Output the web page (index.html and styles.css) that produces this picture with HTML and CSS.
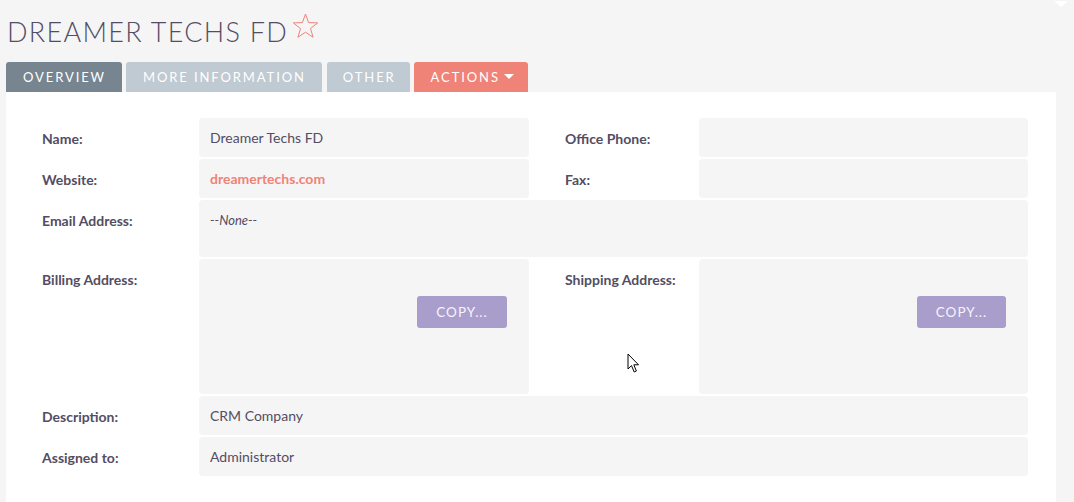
FILE: index.html
```html
<!DOCTYPE html>
<html>
<head>
<meta charset="utf-8">
<link rel="stylesheet" href="styles.css">
</head>
<body>
<div class="corner-caret"></div>
<div class="page">
  <h1 class="title">DREAMER TECHS FD<svg class="star" width="27" height="26" viewBox="0 0 27 26"><polygon points="13.5,1 16.6,9.6 25.7,9.9 18.5,15.5 21.1,24.3 13.5,19.2 5.9,24.3 8.5,15.5 1.3,9.9 10.4,9.6" fill="none" stroke="#f08377" stroke-width="1" stroke-linejoin="round"/></svg></h1>
  <nav class="tabs">
    <div class="tab tab-active">OVERVIEW</div>
    <div class="tab">MORE INFORMATION</div>
    <div class="tab tab-other">OTHER</div>
    <div class="tab tab-actions">ACTIONS<span class="caret"></span></div>
  </nav>
  <section class="panel">
    <div class="grid">
      <div class="label">Name:</div>
      <div class="value">Dreamer Techs FD</div>
      <div class="label label-right">Office Phone:</div>
      <div class="value"></div>

      <div class="label">Website:</div>
      <div class="value"><span class="link">dreamertechs.com</span></div>
      <div class="label label-right">Fax:</div>
      <div class="value"></div>

      <div class="label">Email Address:</div>
      <div class="value value-wide value-email"><em>--None--</em></div>

      <div class="label">Billing Address:</div>
      <div class="value value-address"><span class="copy-btn">COPY...</span></div>
      <div class="label label-right">Shipping Address:</div>
      <div class="value value-address value-address-right"><span class="copy-btn copy-btn-right">COPY...</span></div>

      <div class="label">Description:</div>
      <div class="value value-wide">CRM Company</div>

      <div class="label">Assigned to:</div>
      <div class="value value-wide">Administrator</div>
    </div>
  </section>
</div>
<svg class="cursor" width="13" height="21" viewBox="0 0 13 21"><path d="M1 1 L1 16 L4.5 12.6 L7.2 19 L9.4 18 L6.8 11.8 L11.5 11.8 Z" fill="#ffffff" stroke="#000000" stroke-width="1" stroke-linejoin="round"/></svg>
</body>
</html>
```

FILE: styles.css
```css
html, body {
  margin: 0;
  padding: 0;
  background: #f5f5f5;
  font-family: Lato, "Open Sans", sans-serif;
  color: #534d64;
  height: 100%;
  overflow: hidden;
}

.page {
  padding: 16px 18px 0 6px;
  display: flex;
  flex-direction: column;
  height: 100%;
  box-sizing: border-box;
}

.title {
  margin: 0 0 14px 1px;
  font-weight: 300;
  font-size: 27px;
  line-height: 32px;
  height: 32px;
  letter-spacing: 1.3px;
  color: #534d64;
  display: flex;
  align-items: flex-start;
}

.star {
  margin-left: 4px;
  margin-top: -3px;
}

.tabs {
  display: flex;
  gap: 4px;
  height: 30px;
}

.tab {
  height: 30px;
  line-height: 31px;
  padding: 0 16px 0 17px;
  font-size: 13px;
  letter-spacing: 1.9px;
  color: #ffffff;
  background: #bfcad2;
  border-radius: 3px 3px 0 0;
}

.tab-other {
  margin-left: 1px;
  padding: 0 14px 0 16px;
}

.tab-active {
  background: #778591;
}

.tab-actions {
  background: #f08377;
  display: flex;
  align-items: center;
  padding: 0 14px 0 17px;
}

.caret {
  display: inline-block;
  width: 0;
  height: 0;
  border-left: 5px solid transparent;
  border-right: 5px solid transparent;
  border-top: 5px solid #ffffff;
  margin-left: 4px;
  margin-top: -2px;
}

.panel {
  background: #ffffff;
  flex: 1;
  padding: 26px 28px 0 36px;
}

.grid {
  display: grid;
  grid-template-columns: 157px 330px 170px 329px;
  row-gap: 2px;
}

.label {
  font-weight: 700;
  font-size: 14px;
  line-height: 17px;
  padding-top: 12px;
  color: #534d64;
}

.label-right {
  padding-left: 36px;
}

.value {
  background: #f5f5f5;
  border-radius: 4px;
  min-height: 39px;
  box-sizing: border-box;
  padding: 11px 11px 0 11px;
  font-size: 14px;
  line-height: 17px;
  color: #534d64;
}

.value-wide {
  grid-column: 2 / 5;
}

.value-email {
  min-height: 57px;
}

.value-email em {
  font-size: 13px;
}

.link {
  color: #f08377;
  font-weight: 700;
}

.value-address {
  min-height: 135px;
  display: flex;
  justify-content: flex-end;
  align-items: flex-start;
  padding: 37px 22px 0 0;
}

.copy-btn {
  display: block;
  width: 90px;
  height: 32px;
  line-height: 32px;
  text-align: center;
  background: #a99dcb;
  color: #f6f4fb;
  font-size: 13.5px;
  letter-spacing: 1px;
  border-radius: 3px;
}

.copy-btn-right {
  width: 89px;
}

.corner-caret {
  position: absolute;
  top: 1px;
  left: 1054px;
  width: 0;
  height: 0;
  border-left: 7px solid transparent;
  border-right: 7px solid transparent;
  border-top: 6px solid #ffffff;
}

.cursor {
  position: absolute;
  left: 627px;
  top: 353px;
}
```
